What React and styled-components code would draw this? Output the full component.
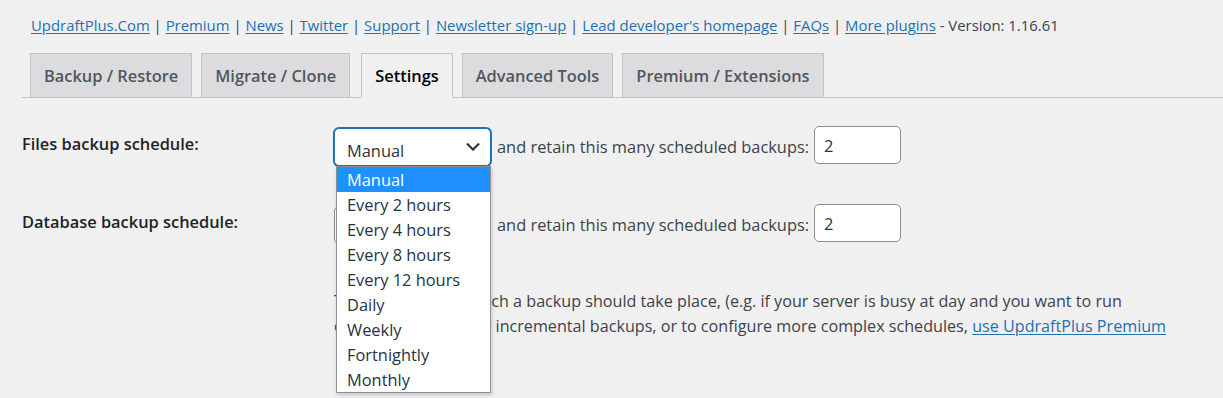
import React from 'react';
import styled, { createGlobalStyle } from 'styled-components';

const GlobalStyle = createGlobalStyle`
  html, body { margin: 0; padding: 0; overflow: hidden; background: #f0f0f1; }
  body {
    font-family: "Open Sans", "Noto Sans", "Liberation Sans", sans-serif;
    font-size: 16.4px;
    line-height: 22px;
    color: #3c434a;
  }
  * { box-sizing: border-box; }
`;

const Wrap = styled.div`
  width: 1223px;
  height: 398px;
  overflow: hidden;
  padding-left: 22px;
`;

const LinksBar = styled.div`
  padding: 14px 0 0 9px;
  font-size: 14.9px;
  white-space: nowrap;
`;

const Link = styled.a`
  color: #2271b1;
  text-decoration: underline;
  text-underline-offset: 2px;
`;

const TabBar = styled.nav`
  display: flex;
  align-items: flex-end;
  height: 45px;
  margin-top: 17px;
  border-bottom: 1px solid #c3c4c7;
`;

const Tab = styled.a`
  display: block;
  height: ${p => (p.$active ? 45 : 44)}px;
  margin: 0 0 ${p => (p.$active ? -1 : 0)}px ${p => p.$gap}px;
  padding: 0 13px;
  border: 1px solid #c3c4c7;
  border-bottom: ${p => (p.$active ? '1px solid #f0f0f1' : 'none')};
  background: ${p => (p.$active ? '#f0f0f1' : '#dcdcde')};
  color: ${p => (p.$active ? '#000' : '#50575e')};
  font-weight: 600;
  line-height: 43px;
  white-space: nowrap;
  text-decoration: none;
`;

const Form = styled.div`
  padding-top: 28px;
`;

const Row = styled.div`
  display: grid;
  grid-template-columns: 312px 1fr;
  height: ${p => p.$h}px;
`;

const Label = styled.div`
  padding-top: 7px;
  font-weight: 600;
  color: #1d2327;
  white-space: nowrap;
`;

const Value = styled.div`
  display: flex;
  align-items: flex-start;
`;

const SelectWrap = styled.div`
  position: relative;
  margin-top: 2px;
  width: 157px;
  height: 38px;
`;

const SelectBox = styled.div`
  display: flex;
  align-items: center;
  justify-content: space-between;
  height: 38px;
  padding: 0 7px 0 12px;
  background: #fff;
  border: 1px solid ${p => (p.$focused ? '#2271b1' : '#8c8f94')};
  box-shadow: ${p => (p.$focused ? '0 0 0 1px #2271b1' : 'none')};
  border-radius: 5px;
  color: #2c3338;
`;

const SelectText = styled.span`
  padding-top: 7px;
`;

const Chevron = styled.svg`
  width: 20px;
  height: 20px;
  flex: none;
`;

const Dropdown = styled.ul`
  position: absolute;
  z-index: 10;
  top: 100%;
  left: 2px;
  width: 155px;
  margin: 0;
  padding: 0;
  list-style: none;
  background: #fff;
  border: 1px solid #8c8f94;
  box-shadow: 1px 2px 4px rgba(0, 0, 0, 0.18);
`;

const Option = styled.li`
  height: 25px;
  padding: 0 10px;
  line-height: 25px;
  white-space: nowrap;
  background: ${p => (p.$selected ? '#1e90ff' : '#fff')};
  color: ${p => (p.$selected ? '#fff' : '#253444')};
`;

const RetainText = styled.span`
  margin: 10px 5px 0 6px;
  white-space: nowrap;
`;

const NumberInput = styled.input`
  width: 87px;
  height: 38px;
  margin: 0;
  padding: 0 9px;
  background: #fff;
  border: 1px solid #8c8f94;
  border-radius: 5px;
  font: inherit;
  line-height: 22px;
  color: #2c3338;
  outline: none;
`;

const Description = styled.p`
  margin: 0;
  font-size: 16.15px;
  line-height: 25px;
  white-space: nowrap;
`;

const options = [
  'Manual',
  'Every 2 hours',
  'Every 4 hours',
  'Every 8 hours',
  'Every 12 hours',
  'Daily',
  'Weekly',
  'Fortnightly',
  'Monthly',
];

const links = [
  'UpdraftPlus.Com',
  'Premium',
  'News',
  'Twitter',
  'Support',
  'Newsletter sign-up',
  "Lead developer's homepage",
  'FAQs',
  'More plugins',
];

const tabs = [
  { label: 'Backup / Restore', gap: 8 },
  { label: 'Migrate / Clone', gap: 9 },
  { label: 'Settings', gap: 11 },
  { label: 'Advanced Tools', gap: 9 },
  { label: 'Premium / Extensions', gap: 9 },
];

function Select({ focused, open }) {
  return (
    <SelectWrap>
      <SelectBox $focused={focused}>
        <SelectText>Manual</SelectText>
        <Chevron viewBox="0 0 20 20">
          <path d="M5 6l5 5 5-5 2 1-7 7-7-7 2-1z" fill="#2c3338" />
        </Chevron>
      </SelectBox>
      {open && (
        <Dropdown>
          {options.map((o, i) => (
            <Option key={o} $selected={i === 0}>{o}</Option>
          ))}
        </Dropdown>
      )}
    </SelectWrap>
  );
}

export default function App() {
  return (
    <>
      <GlobalStyle />
      <Wrap>
        <LinksBar>
          {links.map((l, i) => (
            <React.Fragment key={l}>
              {i > 0 && ' | '}
              <Link href="#">{l}</Link>
            </React.Fragment>
          ))}
          {' - Version: 1.16.61'}
        </LinksBar>
        <TabBar>
          {tabs.map(t => (
            <Tab key={t.label} href="#" $gap={t.gap} $active={t.label === 'Settings'}>{t.label}</Tab>
          ))}
        </TabBar>
        <Form>
          <Row $h={78}>
            <Label>Files backup schedule:</Label>
            <Value>
              <Select focused open />
              <RetainText>and retain this many scheduled backups:</RetainText>
              <NumberInput defaultValue="2" />
            </Value>
          </Row>
          <Row $h={85}>
            <Label>Database backup schedule:</Label>
            <Value>
              <Select />
              <RetainText>and retain this many scheduled backups:</RetainText>
              <NumberInput defaultValue="2" />
            </Value>
          </Row>
          <Row $h={100}>
            <div />
            <Description>
              To fix the time at which a backup should take place, (e.g. if your server is busy at day and you want to run
              <br />
              overnight), or to take incremental backups, or to configure more complex schedules, <Link href="#">use UpdraftPlus Premium</Link>
            </Description>
          </Row>
          <Row $h={40}>
            <Label>Choose your remote storage (tap on an icon to select or unselect):</Label>
            <div />
          </Row>
        </Form>
      </Wrap>
    </>
  );
}
